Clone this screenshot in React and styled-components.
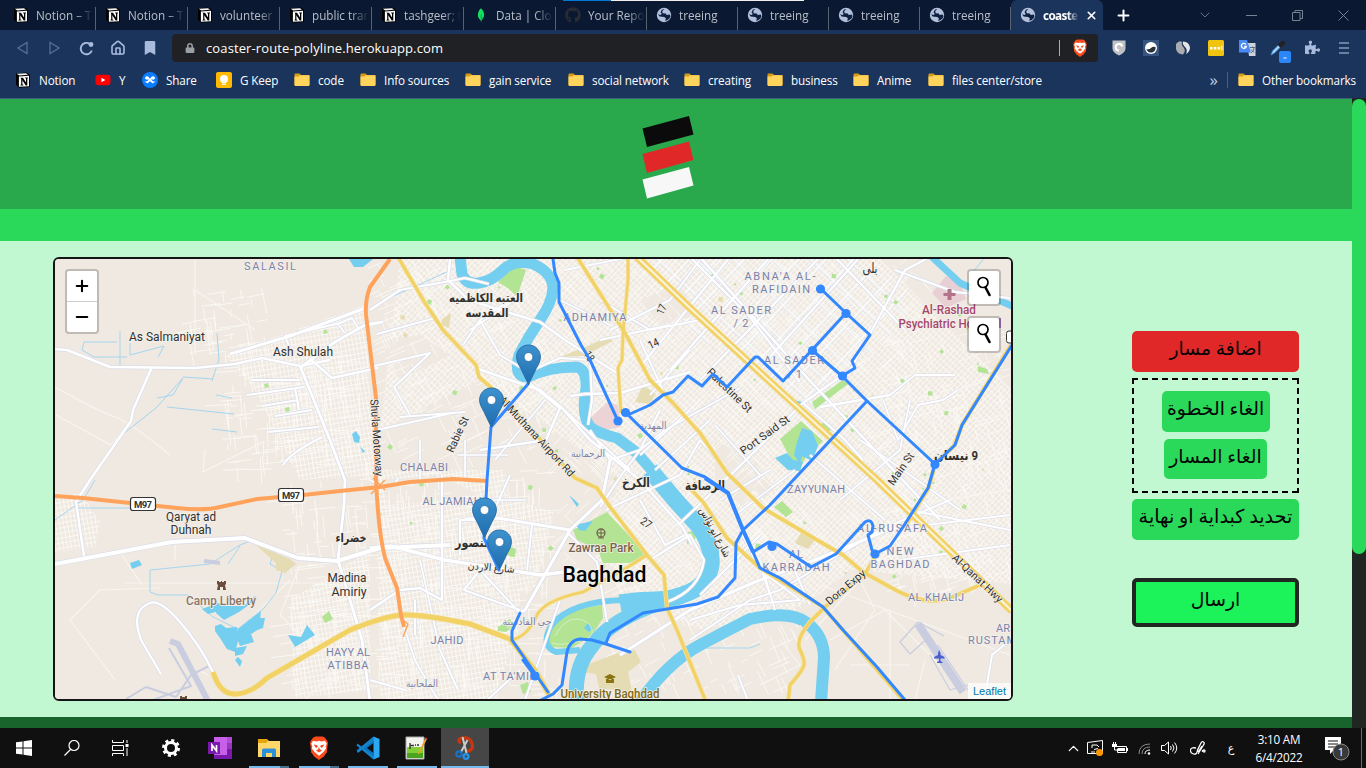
import React from "react";
import styled, { createGlobalStyle, css } from "styled-components";
import { SiMongodb } from "react-icons/si";
import { FaGithub, FaYoutube, FaBookmark, FaLock, FaPuzzlePiece } from "react-icons/fa";
import { ChevronDown, ChevronUp, House, Minus, Plus, X } from "lucide-react";

const GlobalStyle = createGlobalStyle`
  * { box-sizing: border-box; }
  html, body { margin: 0; padding: 0; overflow: hidden; }
  body { font-family: "Open Sans", "Noto Sans", sans-serif; background: #19642c; }
  svg { display: block; }
`;

const Screen = styled.div`
  position: relative;
  width: 1366px;
  height: 768px;
  display: flex;
  flex-direction: column;
  overflow: hidden;
`;

/* ---------- browser ---------- */

const TabStrip = styled.header`
  height: 30px;
  display: flex;
  background: #0a1931;
  padding-left: 4px;
`;

const TabBox = styled.div`
  width: ${(p) => p.$width}px;
  flex: none;
  height: 30px;
  display: flex;
  align-items: center;
  padding-left: 9px;
  border-radius: ${(p) => (p.$active ? "6px 6px 0 0" : "0")};
  background: ${(p) => (p.$active ? "#1b345c" : "linear-gradient(#59626f,#59626f) right 0 top 7px / 1px 23px no-repeat")};
  color: ${(p) => (p.$active ? "#fff" : "#b9bfc8")};
`;

const TabIcon = styled.span`
  width: 16px;
  height: 16px;
  flex: none;
  display: flex;
  align-items: center;
  justify-content: center;
`;

const TabTitle = styled.span`
  margin-left: 7px;
  margin-right: ${(p) => (p.$active ? 6 : 0)}px;
  width: ${(p) => (p.$active ? 36 : 57)}px;
  flex: none;
  overflow: hidden;
  white-space: nowrap;
  font-size: 11.7px;
  line-height: 18px;
  letter-spacing: ${(p) => (p.$active ? "-0.6px" : "0")};
  font-weight: ${(p) => (p.$active ? 700 : 400)};
  mask-image: linear-gradient(90deg, #000 68%, transparent 100%);
`;

const WindowControls = styled.div`
  flex: 1;
  display: flex;
  align-items: center;
  color: #77818f;
`;

const NewTab = styled.span`
  width: 40px;
  margin-right: 39px;
  display: flex;
  justify-content: center;
  color: #fff;
`;

const ControlCell = styled.span`
  width: 46px;
  display: flex;
  justify-content: center;
`;

const ProgressLine = styled.div`
  position: absolute;
  top: 0;
  left: 563px;
  width: 241px;
  height: 1px;
  background: linear-gradient(90deg, #0078d7 48px, #f0f0f0 48px);
`;

const Toolbar = styled.div`
  height: 36px;
  display: flex;
  align-items: center;
  background: #1b345c;
  padding-left: 6px;
`;

const NavButton = styled.span`
  width: 32px;
  display: flex;
  justify-content: center;
  color: ${(p) => (p.$dim ? "#566d93" : "#a9bbdc")};
`;

const AddressBar = styled.div`
  width: 926px;
  height: 28px;
  margin-left: 6px;
  padding: 0 9px 0 13px;
  border-radius: 4px;
  background: #202124;
  display: flex;
  align-items: center;
  color: #fff;
  font-size: 13px;
`;

const Url = styled.span`
  margin-left: 11px;
  flex: 1;
  letter-spacing: 0.12px;
`;

const AddressRule = styled.span`
  width: 1px;
  height: 16px;
  margin-right: 11px;
  background: #a9abb0;
`;

const Extensions = styled.div`
  flex: 1;
  display: flex;
  align-items: center;
  padding-left: 5px;
`;

const ExtensionSlot = styled.span`
  width: 32.2px;
  height: 16px;
  display: flex;
  justify-content: center;
`;

const BookmarksBar = styled.nav`
  height: 32px;
  display: flex;
  align-items: center;
  background: #1b345c;
  padding: 0 10px 5px 15px;
`;

const Bookmark = styled.span`
  width: ${(p) => (p.$width ? p.$width + "px" : "auto")};
  flex: none;
  display: flex;
  align-items: center;
  gap: 8px;
  color: #fff;
  font-size: 11.7px;
  white-space: nowrap;
  letter-spacing: -0.13px;
`;

const BookmarkTail = styled.div`
  margin-left: auto;
  display: flex;
  align-items: center;
  color: #c2cde2;
  font-size: 17px;
  line-height: 16px;
`;

const TailRule = styled.span`
  width: 1px;
  height: 16px;
  margin: 0 10px 0 9px;
  background: #4a5f84;
`;

/* ---------- page ---------- */

const Viewport = styled.div`
  height: 630px;
  display: flex;
`;

const Page = styled.div`
  width: 1352px;
  display: flex;
  flex-direction: column;
`;

const Banner = styled.div`
  height: 111px;
  border-top: 1px solid #3d5f7a;
  background: #2aa84c;
  display: flex;
  justify-content: center;
  padding: 17px 16px 0 0;
`;

const Strip = styled.div`
  height: ${(p) => p.$height}px;
  background: ${(p) => p.$color};
`;

const Main = styled.main`
  height: 476px;
  background: #c1f8d1;
  display: flex;
  align-items: flex-start;
  padding: 16px 0 0 53px;
`;

const MapFrame = styled.section`
  position: relative;
  width: 960px;
  height: 444px;
  border: 2px solid #151515;
  border-radius: 6px;
  overflow: hidden;
  background: #efe9e1;
`;

const mapControl = css`
  position: absolute;
  border: 2px solid rgba(0, 0, 0, 0.2);
  border-radius: 4px;
  background: #fff;
  background-clip: padding-box;
`;

const ZoomControl = styled.div`
  ${mapControl}
  left: 10px;
  top: 10px;
  width: 34px;
`;

const ZoomButton = styled.button`
  display: flex;
  align-items: center;
  justify-content: center;
  width: 30px;
  height: ${(p) => (p.$first ? 31 : 30)}px;
  padding: 0;
  border: 0;
  border-bottom: ${(p) => (p.$first ? "1px solid #ccc" : "0")};
  background: none;
  color: #000;
`;

const SearchControl = styled.div`
  ${mapControl}
  left: 912px;
  top: ${(p) => p.$top}px;
  width: 34px;
  height: 37px;
  display: flex;
  justify-content: center;
  padding-top: 4px;
`;

const Attribution = styled.div`
  position: absolute;
  right: 0;
  bottom: 0;
  height: 16px;
  padding: 0 5px;
  background: rgba(255, 255, 255, 0.7);
  color: #0078a8;
  font: 11px/16px "Liberation Sans", sans-serif;
`;

const Panel = styled.aside`
  width: 167px;
  margin: 74px 0 0 119px;
  display: flex;
  flex-direction: column;
  align-items: stretch;
`;

const ActionButton = styled.button`
  width: ${(p) => p.$width || 167}px;
  height: ${(p) => p.$height || 41}px;
  margin-top: ${(p) => p.$gap || 0}px;
  padding: 0 0 5px;
  border: ${(p) => (p.$outlined ? "4px solid #202622" : "0")};
  border-radius: 5px;
  background: ${(p) => p.$color || "#2ad85a"};
  color: #050505;
  font-family: "Liberation Serif", "DejaVu Sans", serif;
  font-size: ${(p) => p.$size || 18.8}px;
  line-height: 28px;
  white-space: nowrap;
  direction: rtl;
  display: flex;
  align-items: center;
  justify-content: center;
`;

const DashedGroup = styled.div`
  height: 115px;
  margin-top: 6px;
  padding-top: 11px;
  display: flex;
  flex-direction: column;
  align-items: center;
  background:
    repeating-linear-gradient(90deg, #000 0 6px, transparent 6px 10px) left top / 100% 2px no-repeat,
    repeating-linear-gradient(90deg, #000 0 6px, transparent 6px 10px) left bottom / 100% 2px no-repeat,
    repeating-linear-gradient(#000 0 6px, transparent 6px 10px) left top / 2px 100% no-repeat,
    repeating-linear-gradient(#000 0 6px, transparent 6px 10px) right top / 2px 100% no-repeat;
`;

const ScrollTrack = styled.div`
  width: 14px;
  padding-top: 1px;
  background: #202622;
`;

const ScrollThumb = styled.div`
  height: 455px;
  border-radius: 7px;
  background: #2ad85a;
`;

/* ---------- taskbar ---------- */

const Taskbar = styled.footer`
  height: 40px;
  display: flex;
  background: #101010;
  color: #fff;
`;

const TaskCell = styled.span`
  width: ${(p) => p.$width || 49}px;
  height: 40px;
  display: flex;
  align-items: center;
  justify-content: center;
  background: ${(p) =>
    p.$active
      ? "linear-gradient(#76b9ed,#76b9ed) bottom / 100% 2px no-repeat #464646"
      : p.$stacked
      ? "linear-gradient(90deg,#76b9ed 31px,#47708f 31px) bottom / 40px 2px no-repeat"
      : p.$running
      ? "linear-gradient(#76b9ed,#76b9ed) bottom / 40px 2px no-repeat"
      : "none"};
`;

const Tray = styled.div`
  margin-left: auto;
  display: flex;
  align-items: center;
`;

const TraySlot = styled.span`
  width: ${(p) => p.$width}px;
  display: flex;
  justify-content: center;
  font-family: "DejaVu Sans", sans-serif;
  font-size: 11px;
`;

const Clock = styled.div`
  width: 62px;
  text-align: center;
  font-size: 11.7px;
  line-height: 18px;
  letter-spacing: -0.2px;
  white-space: nowrap;
`;

const NoticeSlot = styled.div`
  width: 51px;
  display: flex;
  justify-content: center;
  padding-left: 4px;
`;

const DesktopEdge = styled.span`
  width: 5px;
  height: 40px;
  border-left: 1px solid #6a6a6a;
`;

/* ---------- icons ---------- */

const Notion = () => (
  <svg width="16" height="16" viewBox="0 0 16 16">
    <path d="M1 1.500 11.500.5 15 3v12l-11 .8L1 12.500z" fill="#000" />
    <path d="M1.800 1.800 11 1.200l2 1.500L4.200 3.400z" fill="#f4f4f4" />
    <path d="M3.900 4.400 14 3.800v10.400l-10.100.6z" fill="#fff" />
    <path d="M5.500 5.800h2.500l3 4.700V6.500l-.9-.2v-.8h2.900v.7l-.7.3v6.900H10.700L7.400 8.200v4.200l1 .3v.7H5.500v-.7l.7-.3V6.800z" fill="#000" />
  </svg>
);

const Globe = () => (
  <svg width="16" height="16" viewBox="0 0 16 16">
    <circle cx="8" cy="8" r="7.200" fill="#b3c0dc" />
    <path d="M8.500 2.200 6.200 4l.5 2.200 3 .4 1 1.400 3-.5.8 1.500-1 2.500-2.300 1.800L9 13.800l1-2.200-1.800-1.700-4.500-.4L2 7.200l2.500.8 1.300-1L4.500 5.200 6 2.500z" fill="#0d2040" />
  </svg>
);

const Folder = () => (
  <svg width="16" height="14" viewBox="0 0 16 14">
    <path d="M.5 1.500Q.5.500 1.500.500h4l1.500 1.500h7.500q1 0 1 1v9H.5z" fill="#d79b16" />
    <path d="M.5 3.500h4L6 2.300h9.500V12q0 1-1 1h-13q-1 0-1-1z" fill="#ffd45c" />
  </svg>
);

const ShareIcon = () => (
  <svg width="16" height="16" viewBox="0 0 16 16">
    <circle cx="8" cy="8" r="8" fill="#0a7cff" />
    <path d="M8 8 5.500 5.300M8 8l2.500-2.700M8 8l-3 2.500M8 8l3 2.500" stroke="#fff" strokeWidth="1.800" />
    <path d="M3 6.500a2 2 0 0 1 4-.5L5 8zM13 6.500a2 2 0 0 0-4-.5L11 8zM2.500 9.500h3v2zM13.500 9.500h-3v2z" fill="#fff" />
  </svg>
);

const Keep = () => (
  <svg width="16" height="16" viewBox="0 0 16 16">
    <rect width="16" height="16" rx="2" fill="#ffba00" />
    <circle cx="8" cy="7" r="4" fill="#fff" />
    <path d="M6 9h4v4H6z" fill="#fff" />
    <path d="M6 11.300h4" stroke="#ffba00" strokeWidth=".7" />
  </svg>
);

const Brave = ({ size }) => (
  <svg width={size} height={size} viewBox="0 0 20 20">
    <path d="m5 1.500 2-1h6l2 1 1.500 2 1 2-1 8-2.500 3.500L10 20l-4-3-2.500-3.500-1-8 1-2z" fill="#fb4b1d" />
    <path d="m5 4 3 .5 2-.5 2 .5 3-.5 1.500 2.500-1 2 .5 2-2.500 3L10 16.500 6.500 13.500l-2.500-3 .5-2-1-2z" fill="#fff" />
    <path d="m5.500 7 3 .7L9 9 7.500 10zM14.500 7l-3 .7L11 9l1.500 1zM10 9l.7 2 1.800 1-2.500 1.800L7.500 12l1.800-1z" fill="#fb4b1d" />
  </svg>
);

const Shield = () => (
  <svg width="14" height="16" viewBox="0 0 14 16">
    <path d="M.5.500h13v8q0 4-6.500 7-6.500-3-6.500-7z" fill="#bfc1c5" />
    <path d="M7 10.500a3.300 3.300 0 1 1 3.200-4" fill="none" stroke="#fff" strokeWidth="2" />
  </svg>
);

const Eye = () => (
  <svg width="16" height="16" viewBox="0 0 16 16">
    <rect width="16" height="16" fill="#375481" />
    <circle cx="8" cy="8" r="6" fill="#fff" />
    <path d="M3.500 9q2.500 1 4.500-1t4.500-1a4.600 4.600 0 0 1-9 2" fill="#263238" />
  </svg>
);

const Swirl = () => (
  <svg width="16" height="16" viewBox="0 0 16 16">
    <path d="M1 4Q4 0 7 2q-1 3 2 6 2 3-1 6.500Q2 14 1 9z" fill="#aaabae" />
    <path d="M8 1.500q6 0 7 6 0 4-4 6.500 2-4-1-7-3-3-2-5.500" fill="#e4e4e6" />
  </svg>
);

const Dots = () => (
  <svg width="16" height="16" viewBox="0 0 16 16">
    <rect width="16" height="16" rx="1.500" fill="#f1c40f" />
    <path d="M2 7h2.500v2.500H2zM5.800 7h2.500v2.500H5.800zM9.600 7h2.500v2.500H9.600zM13.400 5.500h1v5h-1z" fill="#fff" />
  </svg>
);

const Translate = () => (
  <svg width="17" height="16" viewBox="0 0 17 16">
    <path d="M8 3h8.500v13H10z" fill="#cdd3dc" />
    <path d="M0 0h8l4 12.500H0z" fill="#4a8af4" />
    <path d="M7 4.500a2.500 2.500 0 1 0 .3 2H5.200" fill="none" stroke="#fff" strokeWidth="1.300" />
    <path d="M11 7.500h5M13.500 6.500v1M12 13q3-2 3-5M12 9.500l3 3" stroke="#5c6b84" fill="none" />
  </svg>
);

const Picker = () => (
  <svg width="22" height="23" viewBox="0 0 22 23">
    <path d="m2 15 1.500-4 6-6 2 2-6 6z" fill="#b7d5f5" stroke="#3488e0" />
    <path d="m8.500 4.500 4-3q2-1.500 3 0t0 3l-4 3.500z" fill="#222" />
    <rect x="10" y="11" width="12" height="12" rx="2" fill="#2b86fa" />
    <path d="M14.500 18h3" stroke="#fff" />
  </svg>
);

const Reload = () => (
  <svg width="15" height="15" viewBox="0 0 15 15" fill="none">
    <path d="M12.800 9.500a5.700 5.700 0 1 1-2-6.500" stroke="currentColor" strokeWidth="1.900" />
    <circle cx="12" cy="3.500" r="2.400" fill="currentColor" />
  </svg>
);

const Search = () => (
  <svg width="18" height="26" viewBox="0 0 18 26">
    <circle cx="8" cy="7.500" r="5" fill="none" stroke="#000" strokeWidth="1.700" />
    <path d="m10.500 12.500 4 7.500" stroke="#000" strokeWidth="2.600" strokeLinecap="round" />
  </svg>
);

const Logo = () => (
  <svg width="52" height="83" viewBox="0 0 52 83">
    <path d="M.5 12.500 47 0l4.500 18.500L5 31z" fill="#0b0b0b" />
    <path d="M.5 38 47 25.500 51.500 44 5 57z" fill="#e02828" />
    <path d="M.5 63.500 47 51 51.500 69.500 5 82.500z" fill="#f7f7f7" />
  </svg>
);

const Svg = ({ w, h, children }) => (
  <svg width={w} height={h} viewBox={`0 0 ${w} ${h}`} fill="none">
    {children}
  </svg>
);

const Windows = () => (
  <Svg w={16} h={16}>
    <path d="M0 2.300 6.500 1.400V7.500H0zM7.500 1.200 16 0v7.500H7.500zM0 8.500h6.500v6.100L0 13.700zM7.500 8.500H16V16l-8.500-1.200z" fill="#fff" />
  </Svg>
);
const TaskSearch = () => (
  <Svg w={16} h={16}>
    <circle cx="10" cy="5.500" r="5" stroke="#fff" strokeWidth="1.200" />
    <path d="M6.500 9.500.5 15.500" stroke="#fff" strokeWidth="1.200" />
  </Svg>
);
const TaskView = () => (
  <Svg w={17} h={16}>
    <path d="M.5 0v2.500h11V0M.5 5.500h11v5H.5zM.5 16v-2.500h11V16M15 0v3M15 8v8" stroke="#fff" />
    <path d="M13.500 4h3v3h-3z" fill="#fff" />
  </Svg>
);
const Gear = () => (
  <Svg w={20} h={20}>
    <circle cx="10" cy="10" r="7.500" stroke="#fff" strokeWidth="3" strokeDasharray="3 2.890" />
    <circle cx="10" cy="10" r="5.500" stroke="#fff" strokeWidth="3" />
  </Svg>
);
const OneNote = () => (
  <Svg w={24} h={22}>
    <path d="M6 0h18v22H6z" fill="#c75fe8" />
    <path d="M19 0h5v6h-5z" fill="#b14bd6" />
    <path d="M19 6h5v6h-5z" fill="#9a35bd" />
    <path d="M19 12h5v10H6v-4h13z" fill="#7719aa" />
    <path d="M0 5h12v12H0z" fill="#7719aa" />
    <path d="M4 14V8l4.500 6V8" stroke="#fff" strokeWidth="1.700" />
  </Svg>
);
const Explorer = () => (
  <Svg w={22} h={19}>
    <path d="M0 0h9l2 2h11v15H0z" fill="#e5a50a" />
    <path d="M0 4h8l2-2h12v16H0z" fill="#ffd869" />
    <path d="M4 18V11q0-1.500 1.500-1.500h11Q18 9.500 18 11v7h-4v-4H8v4z" fill="#2e90d9" />
  </Svg>
);
const Code = () => (
  <Svg w={24} h={24}>
    <path d="M17.500.500 6 12l11.500 11.500V17L11 12l6.500-5z" fill="#0b72bd" />
    <path d="M1.500 7.500 17.500 20v3.500L.5 9.500zM.5 14.500 17.500.500V5L2 17z" fill="#1583cc" />
    <path d="M17.500.500 23.500 3v18l-6 2.500z" fill="#2aa9f2" />
  </Svg>
);
const NotepadPlus = () => (
  <Svg w={23} h={24}>
    <path d="M1 1h18v22H1z" fill="#f4f4ef" stroke="#aaa" />
    <path d="M2 11h16v11H2z" fill="#7fcf35" />
    <path d="M2 17h16v5H2z" fill="#49a41e" />
    <path d="M5 7v6M5 9.500h4M10 9h1M12 9h2" stroke="#333" strokeWidth="1.300" />
    <path d="m20.500 2-7 14-1 3 2.500-2 7-14z" fill="#e9a52d" />
    <path d="m20.500 2 1.500 1" stroke="#c33" strokeWidth="2" />
  </Svg>
);
const Snip = () => (
  <Svg w={20} h={24}>
    <path d="M5 2.500q9-2.500 11.500 3.500t-1.500 8.500q-2 1-3.500-1M6 7Q2.500 5 5 2.500" stroke="#c8370f" strokeWidth="3.200" />
    <path d="m7.500 1 4 16M12.500 4 6 16" stroke="#ccc" strokeWidth="2" />
    <circle cx="4" cy="18" r="2.700" stroke="#1673c7" strokeWidth="2.200" />
    <circle cx="11" cy="20.500" r="2.400" stroke="#2794ec" strokeWidth="2.200" />
  </Svg>
);

/* ---------- map data ---------- */

const rivers = [
  ["M460 257L462 274Q466 285 479 283T503 270 533 264Q552 272 553 288 552 303 540 320T519 355Q513 378 528 377 548 367 577 367 587 370 586 388 581 415 590 427 600 434 617 438L637 453 660 480 677 502 698 525", 11],
  ["M650 470L677 502 698 525Q713 545 711 565 708 584 690 592T655 600 620 603", 17],
  ["M625 600Q570 601 551 626 540 646 556 652L580 650", 6],
  ["M660 603Q610 620 592 646 573 668 577 702", 15],
  ["M640 702Q668 662 700 645T750 619Q790 610 807 623T824 658L821 702", 12],
  ["M932 257L960 283 1012 306", 7],
];

const lakes = [
  "M349 259h24l-10 8h-9z",
  "M352 434l4-3 4 6-1 6-5-1zM360 447l5 4-2 2z",
  "M130 563l9-3 3 5-10 4z",
  "M202 609l16-6 8 6-18 5zM217 603l11 3 16 0 11-10 2 3-18 13-15 8-8-7z",
  "M215 626l6-2 5 4 11-1 2 11-4 14-8-3-7-11-5-7z",
  "M238 629l23-18-2 18-8 5 3 8-14 4-3-8z",
  "M257 618h8l-2 10-6 2zM235 648l12-2-4 8-8 2zM235 660l3-3 4 4-2 6z",
  "M288 635l13 2 6-12 8 10-20 12z",
  "M797 442l5-14 10 3 6 15-6 15-10-5-2 8-6-9z",
  "M775 458l12-5 6 7 10 2-3 9-12-1z",
  "M794 400l8 2 2 4-8-1z",
  "M569 495l10 9-2 3z",
  "M579 524l14-3-8 10-6-1-2-4z",
  "M584 628l4-5 5 5-4 4z",
];

const parks = [
  "M573 530L607 512 647 555 630 563 603 563 598 550 577 540z",
  "M547 638L557 622 577 609 602 605 603 618 592 635 572 648 550 647z",
  "M498 282L514 266 526 270 517 297 509 289z",
  "M780 439L801 421 823 441 806 457 798 472z",
  "M812 402L843 380 848 384 815 409z",
  "M774 507L782 501 793 512 786 517z",
  "M818 429l6-8 10 7-8 5z",
  "M508 546l8 3-1 8-8-2z",
  "M498 627l12-8 4 7-8 6-8-1z",
  "M322 617l7-6 4 8-8 4z",
  "M978 366l9 3 2 5-11-2z",
  "M748 618l18-6 2 4-16 4z",
  "M687 533l9-4-1 12-8 3z",
  "M520 685l8-3 3 10-8 2z",
  "M294 333l4-3 2 4-4 2zM323 331l3-2 2 4-4 1zM264 384l4-1 1 4-4 1zM285 408l4-1 1 4-4 1z",
];

const sand = [
  "M256 545L290 559 296 564 285 573 276 570 276 563z",
  "M635 402l8-17 13 9-7 10z",
  "M586 665l32-12 17-3 6 12-13 10 4 20-33-4-3-14-13-2z",
  "M795 543l6-10 14 7-7 9z",
  "M442 319l9-6-2 15-8-3z",
  "M560 357l30-12 18-9 5 5-30 15z",
];

const motorways = [
  ["M390 259L370 287Q365 300 366 315L376 398V478Q378 530 385 558L397 588 401 615 404 627", 4],
  ["M55 496L83 498 130 503 177 508Q205 511 220 507L257 499 303 495 340 491 380 487 410 482 453 479 488 481", 4],
  ["M385 480l-14 14M385 490l-12-12M400 618l8 6-5 13", 1.5],
];

const yellowRoads = [
  ["M398 257L425 303 443 330 476 365 479 377 503 398 575 478 597 488 610 507 647 555 664 575 667 608 677 630 706 702", 3.5],
  ["M213 672Q220 695 236 694T267 678L350 630Q385 616 403 615T470 624L510 639 537 673 550 697", 5],
  ["M510 640Q527 638 537 615 545 600 583 592L623 570 647 555", 3],
  ["M628 257V280L623 333 622 360 618 368 621 413", 3],
  ["M577 257L625 333 650 380 673 403 700 433 727 473 763 508 817 540 843 555 863 572 890 587Q925 607 950 598L980 585", 3.5],
  ["M875 556L865 574 825 607 810 622Q795 640 800 650T804 665 790 685L788 702", 3.5],
  ["M688 486L703 502 727 538 760 568 823 607 903 700", 3.5],
  ["M1011 345L962 425 954 446 935 464 929 487 904 528", 3.8],
];

const whiteRoads = [
  ["M55 349L67 350 110 367 195 368 235 364 262 358 300 366 330 360", 2.5],
  ["M152 367L133 410 131 421 90 480 76 502 84 556", 2.5],
  ["M55 564L172 542 245 538 298 558 337 561 380 548 450 545", 4],
  ["M230 354L290 336 363 309", 3],
  ["M370 480Q393 494 398 478", 2],
  ["M300 366L330 440 345 480 344 505 338 560 362 640 370 702", 2.8],
  ["M300 368L335 342 365 325 383 322", 3],
  ["M310 359L332 378 378 368", 2.5],
  ["M285 336L340 323 352 318 358 328M285 336l6 15M337 323l8 10", 2],
  ["M252 380h48M247 395l57-8M262 406l36-6M275 416l37-6M295 388l4 22M268 432l50-5M322 437Q290 453 283 465", 2.2],
  ["M213 672Q200 645 180 622T150 603Q130 610 141 640L161 674", 2.3],
  ["M370 310L400 290 450 281 465 278 489 284M377 334L435 318", 2.2],
  ["M370 367L430 353 394 387 410 415M377 430l75-17M400 417l65-5", 2],
  ["M450 259L448 280 469 300 500 310 540 322 565 340 620 375", 2.5],
  ["M476 368L510 380 540 390 562 408 590 440 640 480 683 528 692 545", 2.5],
  ["M528 382L560 408 546 440 480 450M570 396L585 394 620 393 690 372", 2.5],
  ["M470 330L500 310 518 297M463 345L480 320 518 295M480 320l20 35 20 12", 2],
  ["M528 372L560 358 590 360 592 400 588 425", 2.2],
  ["M562 408L630 470M590 430L610 460 640 450 665 430 740 388", 2],
  ["M610 460L602 500 570 530 497 518 465 519", 3],
  ["M370 548L391 546 445 560 540 575 580 570", 3.5],
  ["M570 530L525 610 520 613", 3],
  ["M370 610L400 590 420 588 442 600V475", 2.5],
  ["M480 570L520 613M480 570L464 590 500 603 520 610", 2.2],
  ["M460 520h30l20-45M460 520v35M532 525l-5 45M567 532l30 30 10 60", 2],
  ["M404 627L415 660 432 690 440 702M370 680l35 10M440 650l18 40M415 600v35", 2],
  ["M520 670L485 702M525 700L560 600", 2],
  ["M600 507L620 477 640 450 660 410M606 510L680 475 700 440", 2],
  ["M640 500L665 545 685 535M650 560L690 535 704 560Q700 590 667 602", 2.2],
  ["M690 640L705 630 750 600 780 590 880 530 950 500", 2],
  ["M620 655L690 610 755 582 815 560 900 525", 3],
  ["M690 620L740 605 800 600 760 570 740 530M760 560l15 50M790 560l20 45", 2],
  ["M700 257L800 370 940 520", 2.5],
  ["M803 403L850 370 905 270 930 257M820 407L890 395M803 403l-60 60-65 62M803 403l40 35 20 22", 2.3],
  ["M883 400l15 40 20-35 25-5 15-10M890 395l25-20h40", 1.8],
  ["M835 257L905 330M690 257l60 60 50 65M730 257l-90 110M770 257L670 370M820 257L700 380M860 257l-90 100", 2.2],
  ["M895 270l60 22 55 6", 2.2],
  ["M810 455l75 65M840 500l60-50 10-50M870 470l40 40 100 20M885 530l125-15M900 560l110-15M860 440l100 70", 1.8],
  ["M1010 640L992 655 986 690M738 675l10 26M770 595l-10-30M700 595l60-60", 2],
  ["M610 330l60-30 30-40M600 300l50 30 50-10M640 340l25 55M600 340l70-15", 2],
  ["M495 460l50-60M420 560l20 90M420 440v40M465 440v40M445 500h80M458 455h50", 1.7],
  ["M640 455l50-45M655 470l55-50M700 440l40 45M715 425l45 50M690 350l-40 45M560 300l50 25M565 270l60-12M720 500l50-30M735 515l60-45", 1.8],
];

const farmLines = [
  "M195 260v30l60 40M195 290v65M55 387q45 25 60 30t55 38M131 420l-20 25-55-30M115 680l-45-60 30-30 60-2M125 583h200M122 555l20 30M208 675l-10-5M205 450l-2 22 60-30M175 560v-20M290 580l-40 40M300 565l-20 50 30 30M365 640l-60 60M880 510l130-20",
  "M805 640l55-60 20-40M820 585l190 70M830 640l55-30 60 60M860 580l15 30-40 60M780 640l20 25-40 20M890 610v92M850 665h60M915 700l10-40",
];

const streams = [
  "M84 342h33M84 342l-2 8 12 7h33M120 331v34M130 343v12l34-9-6 11M217 333l2 26-7 22M123 434l33-26 27-30-10 17-16 3M183 377l30 2M216 395l16 3M167 407l67 7M212 429l25 3",
  "M55 520l28-20 12-20M75 508h60M150 570l60-6 30-19 10-4M150 570v22l8 3 30 0 25 22 25 12 26-21 12-15 6-22-12-7 5-15-37-12M240 546l-12 18",
  "M394 296l55-25M968 290l5-18 20-25M690 648l60 0 10-4",
];

const labels = [
  { t: "SALASIL", x: 270, y: 270, w: 52, area: 1 },
  { t: "As Salmaniyat", x: 167, y: 341, w: 76 },
  { t: "Ash Shulah", x: 303, y: 356, w: 60 },
  { t: "Qaryat ad", x: 191, y: 521, w: 50 },
  { t: "Duhnah", x: 191, y: 534, w: 41 },
  { t: "Madina", x: 347, y: 582, w: 39 },
  { t: "Amiriy", x: 349, y: 596, w: 35 },
  { t: "خضراء", x: 351, y: 542, w: 31, bold: 1 },
  { t: "Camp Liberty", x: 221, y: 605, w: 70, fill: "#8b7568" },
  { t: "HAYY AL", x: 348, y: 656, w: 44, area: 1 },
  { t: "ATIBBA", x: 348, y: 669, w: 41, area: 1 },
  { t: "JAHID", x: 447, y: 644, w: 33, area: 1 },
  { t: "CHALABI", x: 424, y: 471, w: 48, area: 1 },
  { t: "AL JAMIAH", x: 452, y: 505, w: 59, area: 1 },
  { t: "AT TA'MIM", x: 511, y: 680, w: 56, area: 1 },
  { t: "ADHAMIYA", x: 595, y: 321, w: 63, area: 1 },
  { t: "ABNA'A AL-", x: 780, y: 280, w: 71, area: 1 },
  { t: "RAFIDAIN", x: 781, y: 293, w: 58, area: 1 },
  { t: "AL SADER", x: 741, y: 314, w: 60, area: 1 },
  { t: "/ 2", x: 741, y: 327, w: 15, area: 1 },
  { t: "AL SADER", x: 794, y: 364, w: 60, area: 1 },
  { t: "/ 1", x: 795, y: 378, w: 14, area: 1 },
  { t: "ZAYYUNAH", x: 816, y: 493, w: 58, area: 1 },
  { t: "AL-RUSAFA", x: 892, y: 532, w: 70, area: 1 },
  { t: "AL", x: 796, y: 558, w: 14, area: 1 },
  { t: "KARRADAH", x: 796, y: 571, w: 67, area: 1 },
  { t: "NEW", x: 900, y: 555, w: 27, area: 1 },
  { t: "BAGHDAD", x: 900, y: 568, w: 59, area: 1 },
  { t: "AL KHALIJ", x: 936, y: 601, w: 56, area: 1 },
  { t: "AR", x: 1003, y: 632, w: 14, area: 1 },
  { t: "RUSTAM", x: 992, y: 644, w: 48, area: 1 },
  { t: "المهدية", x: 653, y: 429, w: 27, area: 1, size: 10 },
  { t: "الرحمانية", x: 588, y: 457, w: 34, area: 1, size: 10 },
  { t: "الملحانية", x: 422, y: 687, w: 32, area: 1, size: 10 },
  { t: "حي القادسية", x: 527, y: 625, w: 49, area: 1, size: 10 },
  { t: "العتبه الكاظميه", x: 486, y: 302, w: 74, bold: 1 },
  { t: "المقدسه", x: 487, y: 317, w: 43, bold: 1 },
  { t: "الكرخ", x: 636, y: 487, w: 28, size: 13, bold: 1 },
  { t: "الرصافة", x: 705, y: 490, w: 40, size: 13, bold: 1 },
  { t: "منصور", x: 473, y: 547, w: 36, size: 13, bold: 1 },
  { t: "9 نيسان", x: 956, y: 460, w: 44, size: 13, rtl: 1, bold: 1 },
  { t: "بلى", x: 870, y: 273, w: 15, size: 14 },
  { t: "Zawraa Park", x: 601, y: 552, w: 65, fill: "#75624f" },
  { t: "University Baghdad", x: 610, y: 698, w: 99, fill: "#7f6a12" },
  { t: "Al-Rashad", x: 949, y: 314, w: 54, fill: "#a5456c" },
  { t: "Psychiatric Hospital", x: 950, y: 328, w: 103, fill: "#a5456c" },
  { t: "Shu'la Motorway", x: 373, y: 438, w: 77, rot: 86, size: 11 },
  { t: "Rabie St", x: 461, y: 436, w: 38, rot: -65, size: 11 },
  { t: "Al-Muthana Airport Rd", x: 534, y: 439, w: 105, rot: 47, size: 11 },
  { t: "Palestine St", x: 727, y: 393, w: 58, rot: 44, size: 11 },
  { t: "Port Said St", x: 767, y: 438, w: 58, rot: -36, size: 11 },
  { t: "Main St", x: 904, y: 471, w: 37, rot: -55, size: 11 },
  { t: "Al-Qanat Hwy", x: 975, y: 581, w: 65, rot: 43, size: 11 },
  { t: "Dora Expy", x: 848, y: 590, w: 48, rot: -40, size: 11 },
  { t: "17", x: 665, y: 311, w: 10, rot: -65, size: 11 },
  { t: "14", x: 655, y: 347, w: 11, rot: -25, size: 11 },
  { t: "18", x: 586, y: 358, w: 10, rot: 60, size: 11 },
  { t: "27", x: 644, y: 526, w: 11, rot: 35, size: 11 },
  { t: "شارع ابو نؤاس", x: 712, y: 534, w: 55, rot: 62, size: 11 },
  { t: "شارع الاردن", x: 491, y: 571, w: 47, rot: 5, size: 10 },
];

const routes = [
  "M552.700 257L555 273 559 283V302L581 345 590 360 618 421",
  "M625 412L630 414 650 405 663 395 673 392 688 376 702 386 713 374 727 387 755 357H758L783 381 812 350 846 313",
  "M821 289L846 313 870 335 852 361 855 368 842 376",
  "M812 350L842 376 867 401 935 464",
  "M867 401L798 475 770 505 743 530 736 543 735 578 718 597 697 604 643 613 610 633 606 643",
  "M625 412L682 468 705 477 728 493 743 530 753 552 760 568 780 578 823 607 843 630 877 667 905 700",
  "M753 552L769 542 777 544 811 567 836 554 865 522Q871 518 873 526L872 532 868 535 872 550 875 554 890 546 903 527 928 488 935 464 955 445 962 425 1012 345",
  "M541 700L553 694 562 685 567 652Q570 640 580 639L592 640 606 644 630 652",
  "M520 613L512 631V640L548 692M523 660L535 676",
  "M528 384L491 427 487 480 484 538 499 570",
];

const stops = [
  [618, 421], [625.500, 412.500], [820.500, 289], [846, 313.500], [812.500, 350.500], [842.500, 376],
  [935, 464.500], [875, 554], [772, 546.500], [535, 676],
];

const pins = [[528.500, 385.500], [491.500, 428.500], [484.500, 538.500], [499.500, 570.500]];

const seeded = (seed) => () => {
  seed = (seed * 16807) % 2147483647;
  return seed / 2147483647;
};

const makeLanes = (box, count, angle, seed) => {
  const rand = seeded(seed);
  const [x0, y0, x1, y1] = box;
  let d = "";
  for (let i = 0; i < count; i++) {
    const x = x0 + rand() * (x1 - x0);
    const y = y0 + rand() * (y1 - y0);
    const a = ((angle + (rand() > 0.5 ? 90 : 0) + rand() * 6) * Math.PI) / 180;
    const len = 6 + rand() * 22;
    d += `M${x.toFixed(1)} ${y.toFixed(1)}l${(Math.cos(a) * len).toFixed(1)} ${(Math.sin(a) * len).toFixed(1)}`;
  }
  return d;
};

const lanes = [
  makeLanes([190, 280, 270, 350], 45, 78, 7),
  makeLanes([225, 350, 370, 470], 170, 82, 11),
  makeLanes([290, 480, 370, 690], 150, 80, 17),
  makeLanes([378, 259, 560, 450], 240, 62, 23),
  makeLanes([378, 470, 560, 695], 300, 86, 29),
  makeLanes([560, 259, 760, 560], 420, 42, 31),
  makeLanes([740, 259, 920, 560], 420, 43, 37),
  makeLanes([890, 330, 1010, 590], 260, 70, 41),
  makeLanes([610, 560, 800, 690], 130, 62, 43),
];

const specks = (() => {
  const rand = seeded(97);
  return Array.from({ length: 80 }, (_, i) => ({
    x: 380 + rand() * 620,
    y: 262 + rand() * 330,
    s: 1.5 + rand() * 3,
    r: rand() * 60,
    c: i % 4 === 0 ? "#e6dcae" : "#b2e493",
  }));
})();

const Pin = ({ x, y }) => (
  <g transform={`translate(${x - 12.500} ${y - 41})`}>
    <path d="M12.500.500C5.500.500.600 6 .600 12.300c0 4.500 2 7.500 4.200 11.700L12.500 40l7.700-16c2.200-4.200 4.200-7.200 4.200-11.700C24.400 6 19.500.500 12.500.500z" fill="url(#pin)" stroke="#2a6fa8" />
    <circle cx="12.500" cy="12.500" r="4.500" fill="#fff" stroke="#2f73aa" />
  </g>
);

const RoadShield = ({ x, y, text }) => (
  <g>
    <rect x={x - 12.500} y={y - 6.500} width="25" height="13" rx="2.500" fill="#fff" stroke="#333" strokeWidth="1.200" />
    <text x={x} y={y + 3.500} textAnchor="middle" fontSize="9.500" fontWeight="700" fill="#333" textLength="18">{text}</text>
  </g>
);

const CityMap = () => (
  <svg width="956" height="440" viewBox="55 259 956 440" fontFamily='Roboto, "DejaVu Sans", sans-serif' fill="none" strokeLinejoin="round">
    <defs>
      <linearGradient id="pin" x1="0" y1="0" x2="0" y2="1">
        <stop offset="0" stopColor="#3d93cf" />
        <stop offset="1" stopColor="#1f6cae" />
      </linearGradient>
      <pattern id="fineA" width="5" height="4" patternUnits="userSpaceOnUse" patternTransform="rotate(80)">
        <path d="M0 .5h5M.5 0v4" stroke="#fcfaf6" strokeWidth=".8" />
      </pattern>
      <pattern id="fineB" width="4" height="5" patternUnits="userSpaceOnUse" patternTransform="rotate(43)">
        <path d="M0 .5h4M.5 0v5" stroke="#fcfaf6" strokeWidth=".8" />
      </pattern>
      <pattern id="blocks" width="20" height="26" patternUnits="userSpaceOnUse" patternTransform="rotate(43)">
        <path d="M0 1h20M1 0v26" stroke="#dcdfeb" strokeWidth="2.800" />
        <path d="M0 1h20M1 0v26" stroke="#fff" strokeWidth="1.700" />
      </pattern>
    </defs>

    <rect x="55" y="259" width="956" height="440" fill="#efe9e1" />
    <path d="M225 355l140-50 10 170-75 5-15-30-30-60zM55 500l25-8 20 30-5 25-40 5zM290 600l80-50v140l-75 8zM378 470h185l-20 90-20 60-30 80H380z" fill="url(#fineA)" />
    <path d="M400 259h480l131 130v195L850 570l-50 40-100 20-110-60 30-90-80-60-60-40-100 50z" fill="url(#fineB)" />
    <path d="M700 259h170l50 40-60 70-50 40-100-70zM640 259h60l40 60-40 30z" fill="url(#blocks)" opacity=".9" />
    <g fill="#efe9e1">
      <path d="M505 420l55 20 25 48-15 30-60-20-12-60zM380 340l40-5 30 20-50 25zM640 300l40-15 20 30-40 10zM715 440l40 20 20 30-30 20-30-30zM790 610l60-30 161 30v89H830zM590 555l50 30-60 15zM380 480l60-5 40 20-90 10zM520 590l25-5-10 40-15 5z" />
    </g>
    {lanes.map((d, i) => <path key={i} d={d} stroke="#fdfbf8" strokeWidth=".8" />)}
    {farmLines.map((d, i) => <path key={i} d={d} stroke="#f8f5ef" strokeWidth="1.200" />)}
    {streams.map((d, i) => <path key={i} d={d} stroke="#a5d5ef" strokeWidth="1" />)}
    {sand.map((d, i) => <path key={i} d={d} fill="#e6dcb4" />)}
    {parks.map((d, i) => <path key={i} d={d} fill="#b2e493" />)}
    {specks.map((s, i) => <rect key={i} x={s.x} y={s.y} width={s.s} height={s.s} fill={s.c} transform={`rotate(${s.r} ${s.x} ${s.y})`} />)}
    <path d="M590 418l18-16 10 3 3 22-20 4-10-7z" fill="#ecd3d6" />
    <path d="M932 293l14-17 15 8 5 15-20 9z" fill="#e8cfd4" />

    {rivers.map(([d, w], i) => <path key={i} d={d} stroke="#73cef0" strokeWidth={w} />)}
    <path d="M800 625l8 8 8 18" stroke="#efe9e1" />
    {lakes.map((d, i) => <path key={i} d={d} fill="#73cef0" />)}
    <path d="M555 636q10-18 22-17t15 10-15 13-25 1" stroke="#d7efc5" />

    <g stroke="#c9cddf" strokeWidth="2">
      <path d="M175 641l34 60M126 699l20-12 30 10 15-22 20-10M169 648l22 38-38 14" />
      <path d="M170 641l8 3 30 57" strokeWidth="6" />
      <path d="M918 624L963 692" strokeWidth="8" />
      <path d="M918 622l-18 20 10 12 20-18M918 622l26 14M930 655l20 35 18-5M938 645l30 45" strokeWidth="1.200" />
      <path d="M204 561l16 2" strokeWidth="4" />
    </g>

    {whiteRoads.map(([d, w], i) => <path key={i} d={d} stroke="#d9dcea" strokeWidth={w + 1.300} />)}
    {whiteRoads.map(([d, w], i) => <path key={i} d={d} stroke="#fff" strokeWidth={w} />)}
    {yellowRoads.map(([d, w], i) => <path key={i} d={d} stroke="#f4e3a5" strokeWidth={w + 1} />)}
    {yellowRoads.map(([d, w], i) => <path key={i} d={d} stroke="#f2d165" strokeWidth={w - 0.3} />)}
    <path d="M637 257L690 308 877 480 1012 611" stroke="#f2d165" strokeWidth="7.500" />
    <path d="M637 257L690 308 877 480 1012 611" stroke="#faf3dc" strokeWidth="2.200" />
    {motorways.map(([d, w], i) => <path key={i} d={d} stroke="#ffa35c" strokeWidth={w} />)}

    {labels.map((l, i) => (
      <text
        key={i}
        x={l.x}
        y={l.y}
        textAnchor="middle"
        direction={l.rtl ? "rtl" : undefined}
        textLength={l.w}
        lengthAdjust={l.area && !/[\u0600-\u06ff]/.test(l.t) ? "spacing" : "spacingAndGlyphs"}
        fontSize={l.size || (l.area ? 11 : 12)}
        fontWeight={l.bold ? 700 : l.fill ? 500 : 400}
        fill={l.fill || (l.area ? "#7a82ab" : "#303030")}
        stroke="#f5f1eb"
        strokeWidth="1.500"
        paintOrder="stroke"
        transform={l.rot ? `rotate(${l.rot} ${l.x} ${l.y})` : undefined}
      >
        {l.t}
      </text>
    ))}
    <text x="604.500" y="582" textAnchor="middle" textLength="84" lengthAdjust="spacingAndGlyphs" fontSize="21.500" fontWeight="500" fill="#000" stroke="#f5f1eb" strokeWidth="2" paintOrder="stroke">Baghdad</text>

    <RoadShield x={143} y={504} text="M97" />
    <RoadShield x={291} y={495} text="M97" />
    <rect x="1006.500" y="331" width="25" height="12" rx="2.500" fill="#fff" stroke="#333" />
    <path d="M217 581h2v1h2v-1h1v1h2v-1h2v3l-1 1 1 5h-3v-3h-3v3h-3l1-5-1-1zM180 696h2v1h3v-1h2v4h-7z" fill="#6b4f3c" />
    <circle cx="601" cy="533" r="4" stroke="#75624f" strokeWidth="1.300" />
    <path d="M598 538h6M601 529v9M597 533h8" stroke="#75624f" />
    <path d="M604 677l6-3 6 3-6 3zM606 679v4h8v-4" fill="#8b7413" />
    <path d="M947.500 289h4v4h4v3h-4v4h-4v-4h-4v-3h4z" fill="#b2728c" />
    <path d="M939 650l1.500 3v2l4 2v1.500h-4v2.500l2 1v1h-5.500v-1l2-1v-2.500h-5V657l4-2v-2z" fill="#4b5fce" />

    {routes.map((d, i) => <path key={i} d={d} stroke="#3388ff" strokeWidth="3" strokeLinecap="round" />)}
    <path d="M705 478L728 493 743 530 753 552" stroke="#3388ff" strokeWidth="4" />
    {stops.map(([x, y], i) => <circle key={i} cx={x} cy={y} r="4.600" fill="#3388ff" />)}
    {pins.map(([x, y], i) => <Pin key={i} x={x} y={y} />)}
  </svg>
);

/* ---------- content ---------- */

const tabs = [
  ["Notion – T", Notion, 92], ["Notion – T", Notion, 92], ["volunteer s", Notion, 92],
  ["public tran", Notion, 92], ["tashgeer; t", Notion, 92],
  ["Data | Clou", () => <SiMongodb size={14} color="#13e05f" />, 92],
  ["Your Repo", () => <FaGithub size={16} color="#272c35" />, 91],
  ["treeing", Globe, 91], ["treeing", Globe, 91], ["treeing", Globe, 91], ["treeing", Globe, 91],
];

const bookmarks = [
  ["Notion", Notion, 80], ["Y", () => <FaYoutube size={16} color="#f00" style={{ background: "linear-gradient(#fff,#fff) center/6px 6px no-repeat" }} />, 47],
  ["Share", ShareIcon, 74], ["G Keep", Keep, 78], ["code", Folder, 66], ["Info sources", Folder, 105],
  ["gain service", Folder, 103], ["social network", Folder, 116], ["creating", Folder, 83],
  ["business", Folder, 86], ["Anime", Folder, 75], ["files center/store", Folder, 130],
];

const extensions = [Shield, Eye, Swirl, Dots, Translate, Picker];

export default function App() {
  return (
    <Screen>
      <GlobalStyle />
      <TabStrip>
        {tabs.map(([title, Icon, width], i) => (
          <TabBox key={i} $width={width}>
            <TabIcon><Icon /></TabIcon>
            <TabTitle>{title}</TabTitle>
          </TabBox>
        ))}
        <TabBox $width={92} $active>
          <TabIcon><Globe /></TabIcon>
          <TabTitle $active>coaste</TabTitle>
          <X size={13} strokeWidth={3} />
        </TabBox>
        <WindowControls>
          <NewTab><Plus size={17} strokeWidth={2.800} /></NewTab>
          <ControlCell><ChevronDown size={16} strokeWidth={1.300} /></ControlCell>
          <ControlCell><Svg w={11} h={11}><path d="M0 5.500h11" stroke="#77818f" /></Svg></ControlCell>
          <ControlCell><Svg w={11} h={11}><path d="M.5 2.500h7.500v8H.5zM3 2.500V.5h7.500v8H8" stroke="#77818f" /></Svg></ControlCell>
          <ControlCell><Svg w={11} h={11}><path d="M.5.5l10 10M10.500.5l-10 10" stroke="#77818f" /></Svg></ControlCell>
        </WindowControls>
      </TabStrip>
      <ProgressLine />
      <Toolbar>
        <NavButton $dim><Svg w={11} h={14}><path d="M10 1.500v11L1 7z" stroke="currentColor" strokeWidth="1.300" /></Svg></NavButton>
        <NavButton $dim><Svg w={11} h={14}><path d="M1 1.500v11L10 7z" stroke="currentColor" strokeWidth="1.300" /></Svg></NavButton>
        <NavButton><Reload /></NavButton>
        <NavButton><House size={16} strokeWidth={2.400} /></NavButton>
        <NavButton><FaBookmark size={14} /></NavButton>
        <AddressBar>
          <FaLock size={10} color="#9aa0a6" />
          <Url>coaster-route-polyline.herokuapp.com</Url>
          <AddressRule />
          <Brave size={18} />
        </AddressBar>
        <Extensions>
          {extensions.map((Icon, i) => <ExtensionSlot key={i}><Icon /></ExtensionSlot>)}
          <ExtensionSlot><FaPuzzlePiece size={15} color="#a9bbdc" /></ExtensionSlot>
          <ExtensionSlot><Svg w={10} h={16}><path d="M0 3h10M0 8h10M0 13h10" stroke="#8798b8" strokeWidth="1.500" /></Svg></ExtensionSlot>
        </Extensions>
      </Toolbar>
      <BookmarksBar>
        {bookmarks.map(([title, Icon, width], i) => (
          <Bookmark key={i} $width={width}><Icon />{title}</Bookmark>
        ))}
        <BookmarkTail>
          »<TailRule />
          <Bookmark><Folder />Other bookmarks</Bookmark>
        </BookmarkTail>
      </BookmarksBar>

      <Viewport>
        <Page>
          <Banner><Logo /></Banner>
          <Strip $height={32} $color="#2ad85a" />
          <Main>
            <MapFrame>
              <CityMap />
              <ZoomControl>
                <ZoomButton $first><Plus size={18} strokeWidth={2.800} /></ZoomButton>
                <ZoomButton><Minus size={18} strokeWidth={2.800} /></ZoomButton>
              </ZoomControl>
              <SearchControl $top={10}><Search /></SearchControl>
              <SearchControl $top={57}><Search /></SearchControl>
              <Attribution>Leaflet</Attribution>
            </MapFrame>
            <Panel>
              <ActionButton $color="#e02828">اضافة مسار</ActionButton>
              <DashedGroup>
                <ActionButton $width={108} $gap={2}>الغاء الخطوة</ActionButton>
                <ActionButton $width={103} $height={40} $gap={7}>الغاء المسار</ActionButton>
              </DashedGroup>
              <ActionButton $gap={6} $size={19.2}>تحديد كبداية او نهاية</ActionButton>
              <ActionButton $gap={38} $height={49} $color="#1cf25a" $outlined>ارسال</ActionButton>
            </Panel>
          </Main>
          <Strip $height={11} $color="#19642c" />
        </Page>
        <ScrollTrack><ScrollThumb /></ScrollTrack>
      </Viewport>

      <Taskbar>
        <TaskCell $width={48}><Windows /></TaskCell>
        <TaskCell $width={48}><TaskSearch /></TaskCell>
        <TaskCell $width={48}><TaskView /></TaskCell>
        <TaskCell $width={53}><Gear /></TaskCell>
        <TaskCell $width={46}><OneNote /></TaskCell>
        <TaskCell $width={51} $stacked><Explorer /></TaskCell>
        <TaskCell $stacked><Brave size={24} /></TaskCell>
        <TaskCell $running><Code /></TaskCell>
        <TaskCell $running><NotepadPlus /></TaskCell>
        <TaskCell $width={48} $active><Snip /></TaskCell>
        <Tray>
          <TraySlot $width={20}><ChevronUp size={17} strokeWidth={1.800} /></TraySlot>
          <TraySlot $width={24}>
            <Svg w={17} h={16}>
              <path d="M.5 2.500 15.500.5v13H.5zM4 12h4M5 8V5h5l2 2M7 9.500l4-1" stroke="#fff" />
              <circle cx="12.500" cy="12.500" r="3.500" fill="#ff9800" />
            </Svg>
          </TraySlot>
          <TraySlot $width={26}>
            <Svg w={16} h={12}>
              <path d="M4.500 4.500h10v6h-9v-4" stroke="#fff" />
              <path d="M6 6h7v3H6zM14.500 6H16v3h-1.500zM0 2h5v3H0z" fill="#fff" />
              <path d="M1.500 0v2M3.500 0v2M2.500 5v3h3" stroke="#fff" />
            </Svg>
          </TraySlot>
          <TraySlot $width={23}>
            <Svg w={13} h={13}>
              <path d="M1 12Q1 2 12 2M4 12q0-7 8-7" stroke="#888" />
              <path d="M7 12q0-4 5-4" stroke="#fff" />
              <circle cx="11" cy="11.500" r="1.300" fill="#fff" />
            </Svg>
          </TraySlot>
          <TraySlot $width={26}>
            <Svg w={17} h={14}>
              <path d="M.5 4.500h3l4-3.500v12l-4-3.500h-3zM9.500 5q1.500 2 0 4M11.500 3.500q3 3.500 0 7M13.500 1.500q4.500 5.500 0 11" stroke="#fff" />
            </Svg>
          </TraySlot>
          <TraySlot $width={32}>
            <Svg w={16} h={15}>
              <path d="M6 7Q1 6 .5 9t3 4 4-4L11 2q1-2 2.500-1t0 3L8 13M8 11l4-6M12 10q3-2 3 0t-3 0" stroke="#fff" strokeWidth="1.300" />
            </Svg>
          </TraySlot>
          <TraySlot $width={34}>ع</TraySlot>
          <Clock>3:10 AM<br />6/4/2022</Clock>
          <NoticeSlot>
            <svg width="25" height="25" viewBox="0 0 25 25">
              <path d="M0 1h16v13H9l-4 4v-4H0z" fill="#fff" />
              <path d="M3 5h10M3 8h10M3 11h7" stroke="#111" />
              <circle cx="16" cy="16" r="8" fill="#393939" stroke="#888" />
              <text x="16" y="20" textAnchor="middle" fontSize="11" fill="#fff">1</text>
            </svg>
          </NoticeSlot>
          <DesktopEdge />
        </Tray>
      </Taskbar>
    </Screen>
  );
}
